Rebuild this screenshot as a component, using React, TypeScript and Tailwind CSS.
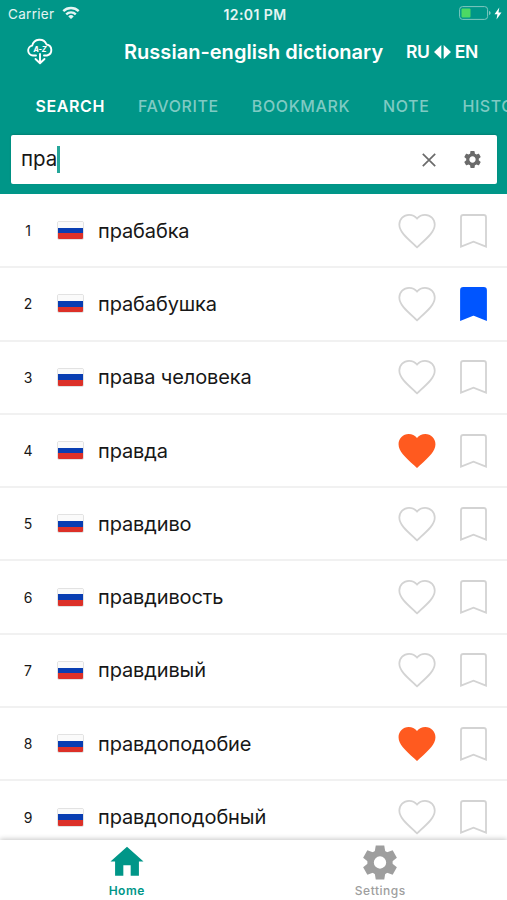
import { MdSettings } from 'react-icons/md';

const tabs = ['SEARCH', 'FAVORITE', 'BOOKMARK', 'NOTE', 'HISTORY'];

const words = [
  { text: 'прабабка' },
  { text: 'прабабушка', marked: true },
  { text: 'права человека' },
  { text: 'правда', liked: true },
  { text: 'правдиво' },
  { text: 'правдивость' },
  { text: 'правдивый' },
  { text: 'правдоподобие', liked: true },
  { text: 'правдоподобный' },
];

function StatusBar() {
  return (
    <div className="flex h-7 items-center pl-[8px] pr-[5px] text-[13.5px] text-white/90">
      <div className="flex flex-1 items-center gap-[8px]">
        <span className="tracking-[0.3px]">Carrier</span>
        <svg className="mb-[2px]" width="18" height="14" viewBox="0 0 18 14" fill="none" stroke="currentColor" strokeWidth="2.4">
          <path d="M1.3 5.2a11 11 0 0 1 15.4 0M4.2 8.3a6.9 6.9 0 0 1 9.6 0" />
          <path d="M9 13.1 6.3 10.4a3.9 3.9 0 0 1 5.4 0Z" fill="currentColor" stroke="none" />
        </svg>
      </div>
      <span className="text-[14px] font-semibold tracking-[0.4px]">12:01 PM</span>
      <div className="flex flex-1 items-center justify-end gap-[3px] pb-[2px]">
        <svg width="32" height="14" viewBox="0 0 32 14">
          <rect x="0.6" y="0.6" width="28" height="12.8" rx="3" fill="none" stroke="#80c8c0" />
          <rect x="2.5" y="2.5" width="9" height="9" rx="1" fill="#4cd964" />
          <path d="M30 5v4c1-.4 1.6-1.1 1.6-2S31 5.4 30 5Z" fill="#80c8c0" />
        </svg>
        <svg width="8" height="13" viewBox="0 0 8 13" fill="white">
          <path d="M5.3.5.5 7.3h2.9L2.5 12.5 7.5 5.5H4.5Z" />
        </svg>
      </div>
    </div>
  );
}

function DownloadIcon() {
  return (
    <svg width="28" height="28" viewBox="0 0 28 28" fill="none" stroke="white" strokeWidth="1.9" strokeLinecap="round" strokeLinejoin="round">
      <path d="M10 17.500H7a5 5 0 0 1-.8-9.900A7.500 7.500 0 0 1 20.500 6.500a5.600 5.600 0 0 1 .5 11h-3" />
      <path d="M14 16v9M9.500 21 14 25.200l4.500-4.200" />
      <text x="14" y="14" textAnchor="middle" fill="white" stroke="none" fontSize="7" fontWeight="800" fontStyle="italic">A-Z</text>
    </svg>
  );
}

function Flag() {
  return (
    <div className="mr-[14px] flex h-[19px] w-[27px] flex-col overflow-hidden rounded-[2px] border border-[#e2e2e2]">
      <div className="flex-1 bg-[#fafafa]" />
      <div className="flex-1 bg-[#083db2]" />
      <div className="flex-1 bg-[#dc3028]" />
    </div>
  );
}

function Heart({ filled }: { filled?: boolean }) {
  return (
    <svg
      className="mr-[24px]"
      width="38"
      height="36"
      viewBox="1.7 2.4 20.6 19.5"
      fill={filled ? '#ff5a1f' : 'none'}
      stroke={filled ? 'none' : '#d3d3d3'}
      strokeWidth="1"
    >
      <path
        transform={filled ? undefined : 'translate(.5 .5) scale(.96)'}
        d="M12 21.350l-1.450-1.320C5.400 15.360 2 12.280 2 8.500 2 5.420 4.420 3 7.500 3c1.740 0 3.410.81 4.500 2.090C13.090 3.810 14.760 3 16.500 3 19.580 3 22 5.420 22 8.500c0 3.780-3.400 6.860-8.550 11.540L12 21.350z"
      />
    </svg>
  );
}

function Bookmark({ filled }: { filled?: boolean }) {
  return (
    <svg width="27" height="34" viewBox="0 0 27 34" fill={filled ? '#0055ff' : 'none'} stroke={filled ? '#0055ff' : '#d3d3d3'} strokeWidth="1.8">
      <path d="M1 32.600V3.300Q1 1 3.300 1H23.700Q26 1 26 3.300V32.600L13.500 27.600Z" />
    </svg>
  );
}

function HomeIcon() {
  return (
    <svg width="36" height="36" viewBox="0 0 36 36" fill="currentColor">
      <path d="M18 2 36 18H31V33.500H22V22H14V33.500H5V18H0Z" />
    </svg>
  );
}

function GearIcon() {
  return (
    <svg width="38" height="38" viewBox="-19 -19 38 38">
      <circle r="10.2" fill="none" stroke="currentColor" strokeWidth="7" />
      {[0, 60, 120, 180, 240, 300].map((angle) => (
        <path key={angle} transform={`rotate(${angle})`} d="M-4.600-18.500h9.200l1.200 7h-11.600Z" fill="currentColor" />
      ))}
    </svg>
  );
}

export default function App() {
  return (
    <div className="flex h-[900px] w-[507px] flex-col overflow-hidden bg-white font-['Inter',sans-serif]">
      <header className="h-[194px] shrink-0 bg-[#009688] text-white">
        <StatusBar />
        <div className="flex h-[48px] items-center pl-[26px]">
          <DownloadIcon />
          <h1 className="ml-[70px] w-[260px] whitespace-nowrap text-[20px] font-semibold tracking-[0.03px]">Russian-english dictionary</h1>
          <div className="ml-[22px] flex items-center gap-[4px] text-[17.5px] font-semibold tracking-[-0.3px]">
            <span>RU</span>
            <svg width="17" height="14" viewBox="0 0 17 14" fill="white">
              <path d="M7.300 0v14L0 7ZM9.700 0v14L17 7Z" />
            </svg>
            <span>EN</span>
          </div>
        </div>
        <nav className="flex h-[59px] items-center gap-[33px] overflow-hidden pl-[35.5px] text-[16px] font-medium tracking-[0.6px] text-[#7fcac3]">
          {tabs.map((tab, i) => (
            <span key={tab} className={i === 0 ? 'font-semibold text-white' : ''}>
              {tab}
            </span>
          ))}
        </nav>
        <div className="ml-[11px] mr-[10px] flex h-[49px] items-center rounded-[2px] bg-white pl-[10px] pr-[14px] text-[#6b6b6b] shadow-[0_-1px_2px_rgba(0,0,0,0.15)]">
          <span className="text-[20.5px] text-[#171717]">пра</span>
          <span className="h-[27px] w-[2.5px] bg-[#26a69a]" />
          <svg className="ml-auto mr-[26px]" width="14" height="14" viewBox="0 0 14 14" stroke="currentColor" strokeWidth="1.7">
            <path d="M.8.8l12.400 12.400M13.200.8.8 13.200" />
          </svg>
          <MdSettings size={21} />
        </div>
      </header>

      <main className="min-h-0 flex-1 overflow-hidden pt-px">
        {words.map((word, i) => (
          <div key={word.text} className="flex h-[73.3px] items-center border-b-2 border-[#f1f1f1] pr-[20.5px] text-[#171717]">
            <span className="w-[57px] pr-[1px] text-center text-[14px]">{i + 1}</span>
            <Flag />
            <span className="flex-1 text-[20px] tracking-[-0.12px]">{word.text}</span>
            <Heart filled={word.liked} />
            <Bookmark filled={word.marked} />
          </div>
        ))}
      </main>

      <footer className="relative flex h-[60px] shrink-0 bg-white text-[12px] tracking-[0.5px] shadow-[0_-1px_5px_rgba(0,0,0,0.22)]">
        <div className="flex flex-1 flex-col items-center pt-[5px] font-semibold text-[#009688]">
          <HomeIcon />
          <span className="mt-[4px]">Home</span>
        </div>
        <div className="flex flex-1 flex-col items-center pt-[5px] font-medium text-[#9e9e9e]">
          <GearIcon />
          <span className="mt-[2px]">Settings</span>
        </div>
      </footer>
    </div>
  );
}
